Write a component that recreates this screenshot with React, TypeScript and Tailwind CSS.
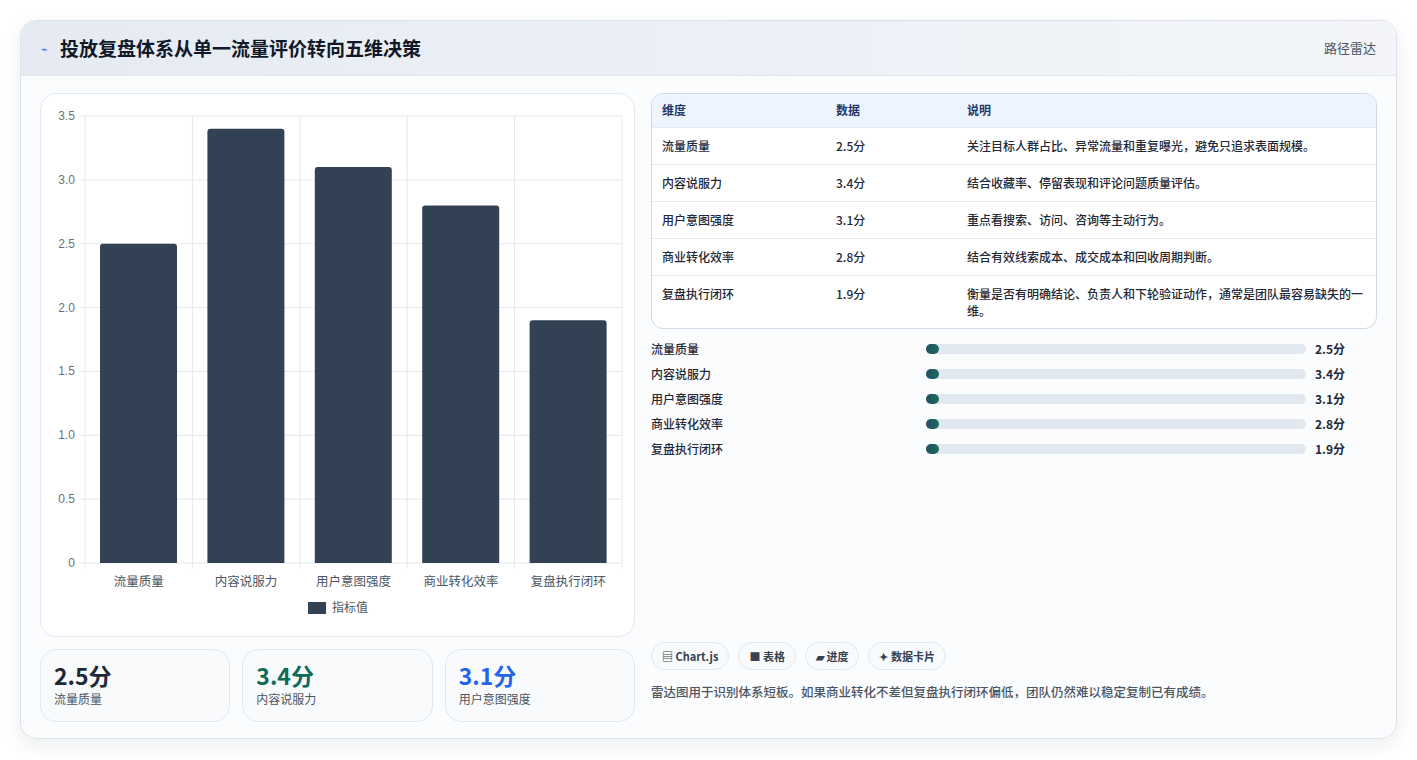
const F = { fontFamily: '"Noto Sans CJK SC", "Noto Sans", sans-serif' };

const dims = [
  { name: "流量质量", v: 2.5, note: "关注目标人群占比、异常流量和重复曝光，避免只追求表面规模。" },
  { name: "内容说服力", v: 3.4, note: "结合收藏率、停留表现和评论问题质量评估。" },
  { name: "用户意图强度", v: 3.1, note: "重点看搜索、访问、咨询等主动行为。" },
  { name: "商业转化效率", v: 2.8, note: "结合有效线索成本、成交成本和回收周期判断。" },
  { name: "复盘执行闭环", v: 1.9, note: "衡量是否有明确结论、负责人和下轮验证动作，通常是团队最容易缺失的一维。" },
];

const Chart = () => {
  // plot area 537 x 447, 0..3.5
  const W = 537, H = 447, ox = 44, oy = 22;
  const ticks = [0, 0.5, 1, 1.5, 2, 2.5, 3, 3.5];
  const cw = W / 5;
  return (
    <svg width="594" height="543" className="block">
      {ticks.map((t) => {
        const y = oy + H - (t / 3.5) * H;
        return (
          <g key={t}>
            <line x1={ox - 6} x2={ox + W} y1={y} y2={y} stroke="#e5e7eb" />
            <text x={ox - 10} y={y + 4} textAnchor="end" fontSize="12" fill="#6b7280" fontFamily="Liberation Sans, sans-serif">
              {t === 0 ? "0" : t.toFixed(1)}
            </text>
          </g>
        );
      })}
      {[0, 1, 2, 3, 4, 5].map((i) => (
        <line key={i} x1={ox + i * cw} x2={ox + i * cw} y1={oy} y2={oy + H + 6} stroke="#e5e7eb" />
      ))}
      {dims.map((d, i) => {
        const h = (d.v / 3.5) * H;
        return (
          <g key={d.name}>
            <path
              d={`M${ox + i * cw + 15} ${oy + H} V${oy + H - h + 3} q0 -3 3 -3 h71 q3 0 3 3 V${oy + H} Z`}
              fill="#334155"
            />
            <text x={ox + i * cw + cw / 2} y={oy + H + 23} textAnchor="middle" fontSize="12.5" fill="#4b5563" fontFamily='"Noto Sans CJK SC", sans-serif'>
              {d.name}
            </text>
          </g>
        );
      })}
      <rect x="267" y="508" width="18" height="12" fill="#334155" />
      <text x="291" y="518" fontSize="12" fill="#4b5563" fontFamily='"Noto Sans CJK SC", sans-serif'>指标值</text>
    </svg>
  );
};

export default function App() {
  return (
    <div className="min-h-[760px] bg-white p-5" style={F}>
      <div className="rounded-2xl border border-[#dde3ec] bg-[#fbfcfe] shadow-[0_6px_20px_rgba(15,23,42,0.08)] overflow-hidden h-[719px] flex flex-col">
        <div className="h-[55px] shrink-0 flex items-center justify-between px-5 bg-gradient-to-r from-[#e6ebf3] to-[#f3f5f9] border-b border-[#e3e8ef]">
          <div className="flex items-center gap-3">
            <span className="text-[#3b6fd8] text-[11px]">⌁</span>
            <h1 className="text-[19px] font-bold text-[#111827]">投放复盘体系从单一流量评价转向五维决策</h1>
          </div>
          <span className="text-[13px] text-[#4b5563]">路径雷达</span>
        </div>
        <div className="flex gap-4 px-[19px] pt-[17px]">
          <div className="w-[595px] flex flex-col gap-3">
            <div className="rounded-2xl border border-[#e2e8f0] bg-white h-[544px] overflow-hidden">
              <Chart />
            </div>
            <div className="grid grid-cols-3 gap-3">
              {[
                ["2.5分", "流量质量", "text-[#1f2937]"],
                ["3.4分", "内容说服力", "text-[#0f6b5a]"],
                ["3.1分", "用户意图强度", "text-[#2563eb]"],
              ].map(([v, l, c]) => (
                <div key={l} className="h-[73px] rounded-2xl border border-[#e2e8f0] bg-[#f8fafc] px-[13px] pt-[9px]">
                  <div className={`text-[23px] font-bold leading-[32px] ${c}`}>{v}</div>
                  <div className="text-[12px] text-[#4b5563] leading-4">{l}</div>
                </div>
              ))}
            </div>
          </div>
          <div className="flex-1 flex flex-col">
            <div className="rounded-xl border border-[#cfd9e8] overflow-hidden bg-white">
              <table className="w-full text-[12px] text-[#1f2937] border-collapse">
                <thead>
                  <tr className="bg-[#eef4fd] text-[#1e3a6b] h-[33px] text-left">
                    <th className="pl-[10px] w-[184px] font-semibold">维度</th>
                    <th className="w-[131px] font-semibold">数据</th>
                    <th className="font-semibold">说明</th>
                  </tr>
                </thead>
                <tbody>
                  {dims.map((d) => (
                    <tr key={d.name} className="border-t border-[#e5e9f0] align-top">
                      <td className="pl-[10px] py-[9px] font-medium">{d.name}</td>
                      <td className="py-[9px] font-medium">{d.v}分</td>
                      <td className="py-[9px] pr-3 leading-[17px] font-medium">{d.note}</td>
                    </tr>
                  ))}
                </tbody>
              </table>
            </div>
            <div className="mt-[11px] flex flex-col gap-[7px]">
              {dims.map((d) => (
                <div key={d.name} className="flex items-center h-[18px] text-[12px] font-medium text-[#1f2937]">
                  <span className="w-[275px]">{d.name}</span>
                  <div className="w-[380px] h-[10px] rounded-full bg-[#e2e8f0]">
                    <div className="h-[10px] w-[13px] rounded-full bg-gradient-to-r from-[#1e4f5e] to-[#1f6b63]" />
                  </div>
                  <span className="ml-[9px] font-bold">{d.v}分</span>
                </div>
              ))}
            </div>
            <div className="mt-auto pb-[20px]">
              <div className="flex gap-[9px] mb-[13px]">
                {["▤ Chart.js", "■ 表格", "▰ 进度", "✦ 数据卡片"].map((p) => (
                  <span key={p} className="h-[28px] px-[10px] flex items-center rounded-full border border-[#e2e8f0] bg-[#f8fafc] text-[11px] font-semibold text-[#374151]">
                    {p}
                  </span>
                ))}
              </div>
              <p className="text-[12.5px] text-[#4b5563] font-medium">雷达图用于识别体系短板。如果商业转化不差但复盘执行闭环偏低，团队仍然难以稳定复制已有成绩。</p>
            </div>
          </div>
        </div>
      </div>
    </div>
  );
}
